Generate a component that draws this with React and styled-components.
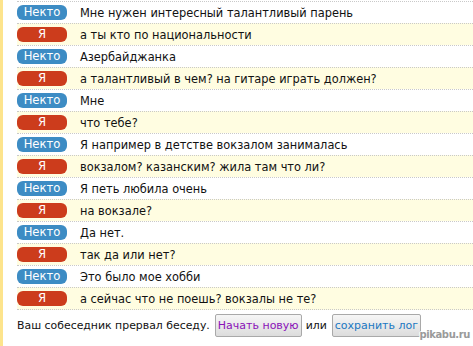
import React from "react";
import styled, { createGlobalStyle } from "styled-components";

const Global = createGlobalStyle`
  html, body { margin: 0; padding: 0; background: #fff; }
  body { font-family: "DejaVu Sans", Verdana, sans-serif; width: 473px; height: 346px; overflow: hidden; }
`;

const Page = styled.div`
  display: flex;
  height: 346px;
`;

const Strip = styled.div`
  width: 3px;
  flex: none;
  background: #fde48c;
`;

const Main = styled.div`
  flex: 1;
  padding-left: 14px;
  padding-top: 1px;
  display: flex;
  flex-direction: column;
`;

const Row = styled.div`
  display: flex;
  align-items: center;
  height: 21px;
  border-top: 1px dotted #c9c9c9;
  background: ${(p) => (p.$me ? "#fffde1" : "#ffffff")};
  &:last-of-type { border-bottom: 1px dotted #c9c9c9; }
`;

const Badge = styled.span`
  flex: none;
  width: 50px;
  height: 15px;
  line-height: 15px;
  border-radius: 6px;
  background: ${(p) => (p.$me ? "#cc3c1c" : "#3d8cc4")};
  color: #fff;
  font-size: 11.6px;
  text-align: center;
`;

const Text = styled.span`
  margin-left: 13px;
  font-size: 11.4px;
  color: #111;
  white-space: nowrap;
`;

const Footer = styled.div`
  display: flex;
  align-items: center;
  margin-top: 4px;
  font-size: 10.9px;
  color: #111;
  position: relative;
  white-space: nowrap;
`;

const Button = styled.button`
  font-family: "DejaVu Sans", Verdana, sans-serif;
  font-size: 11px;
  height: 23px;
  padding: 0 2px;
  margin: 0 4px 0 5px;
  border: 1px solid #a9a9a9;
  border-radius: 2px;
  background: linear-gradient(#f6f6f6, #dcdcdc);
  color: ${(p) => p.$color};
`;

const Mark = styled.span`
  position: absolute;
  right: 3px;
  top: 15px;
  font-family: "DejaVu Sans", Verdana, sans-serif;
  font-weight: bold;
  font-size: 10px;
  color: #9a9a9a;
  text-shadow: 1px 0 #fff, -1px 0 #fff, 0 1px #fff, 0 -1px #fff;
  letter-spacing: -0.4px;
`;

const msgs = [
  [0, "Мне нужен интересный талантливый парень"],
  [1, "а ты кто по национальности"],
  [0, "Азербайджанка"],
  [1, "а талантливый в чем? на гитаре играть должен?"],
  [0, "Мне"],
  [1, "что тебе?"],
  [0, "Я например в детстве вокзалом занималась"],
  [1, "вокзалом? казанским? жила там что ли?"],
  [0, "Я петь любила очень"],
  [1, "на вокзале?"],
  [0, "Да нет."],
  [1, "так да или нет?"],
  [0, "Это было мое хобби"],
  [1, "а сейчас что не поешь? вокзалы не те?"],
];

export default function App() {
  return (
    <Page>
      <Global />
      <Strip />
      <Main>
        <div>
          {msgs.map(([me, t], i) => (
            <Row key={i} $me={me}>
              <Badge $me={me}>{me ? "Я" : "Некто"}</Badge>
              <Text>{t}</Text>
            </Row>
          ))}
        </div>
        <Footer>
          Ваш собеседник прервал беседу.
          <Button $color="#8a12b8">Начать новую</Button>
          или
          <Button $color="#1b78c2">сохранить лог</Button>
          <Mark>pikabu.ru</Mark>
        </Footer>
      </Main>
    </Page>
  );
}
